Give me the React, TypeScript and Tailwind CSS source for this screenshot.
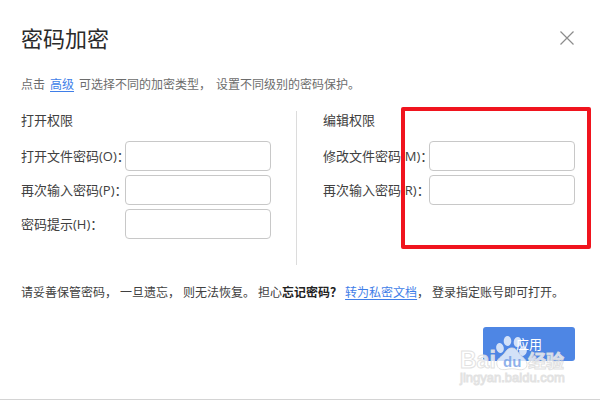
interface FieldProps {
  id: string;
  label: string;
}

function OpenField({ id, label }: FieldProps) {
  return (
    <div className="flex items-center">
      <label htmlFor={id} className="w-[104px] shrink-0 whitespace-nowrap">{label}</label>
      <input id={id} type="password" className="h-[30px] w-0 flex-1 rounded border border-[#c8c8c8] bg-white px-2 outline-none" />
    </div>
  );
}

function EditField({ id, label }: FieldProps) {
  return (
    <div className="flex items-center">
      <label htmlFor={id} className="w-[106px] shrink-0 whitespace-nowrap">{label}</label>
      <input id={id} type="password" className="h-[30px] w-0 flex-1 rounded border border-[#c8c8c8] bg-white px-2 outline-none" />
    </div>
  );
}

function Watermark() {
  return (
    <svg
      viewBox="0 0 112 52"
      className="pointer-events-none absolute right-[30px] bottom-[13px] h-[52px] w-[112px]"
      fill="#ffffff"
      fillOpacity="0.75"
      stroke="#dedede"
      strokeOpacity="0.9"
      strokeWidth="1"
    >
      <text x="2" y="34" fontSize="23" fontWeight="700" fontFamily="Liberation Sans, sans-serif">Bai</text>
      <g stroke="none">
        <ellipse cx="42" cy="14" rx="3.8" ry="5" transform="rotate(-12 42 14)" />
        <ellipse cx="49.5" cy="7" rx="3.8" ry="5" />
        <ellipse cx="59.5" cy="8" rx="3.8" ry="5" transform="rotate(8 59.5 8)" />
        <ellipse cx="65" cy="17" rx="3.8" ry="5" transform="rotate(14 65 17)" />
      </g>
      <path d="M54 14c-5 0-6 4-9 7-5 4-7 6-6 10 1 4 4 5 9 4.500 4-1 8-1 12 0 5 1 9-1 9-5 0-4-3-6-7-10-3-3-4-6.500-8-6.500z" />
      <text x="45" y="33" fontSize="15" fontWeight="700" fill="#6b97e3" stroke="none" fontFamily="Liberation Sans, sans-serif">du</text>
      <text x="70" y="34" fontSize="18" fontWeight="700" fontFamily="'Noto Sans CJK SC', sans-serif">经验</text>
      <text x="2" y="48" fontSize="13" fontFamily="Liberation Sans, sans-serif">jingyan.baidu.com</text>
    </svg>
  );
}

export default function App() {
  return (
    <div className="relative flex min-h-screen flex-col border-b border-[#d4d4d4] bg-white pr-[25px] pl-[21px] font-['Open_Sans','Noto_Sans_CJK_SC',sans-serif] text-[13px] leading-5 text-[#404040]">
      <header className="flex items-center justify-between pt-[23px]">
        <h1 className="text-[22px] leading-[30px] text-[#2a2a2a]">密码加密</h1>
        <button type="button" aria-label="关闭" className="p-px">
          <svg viewBox="0 0 14 14" className="size-[14px]" fill="none" stroke="#8c8c8c" strokeWidth="1.2">
            <path d="M0.5 0.5l13 13M13.5 0.5l-13 13" />
          </svg>
        </button>
      </header>

      <p className="mt-[22px] flex gap-[5px] text-xs leading-5 whitespace-nowrap text-[#6c6c6c]">
        <span>点击</span>
        <a href="#advanced" className="text-[#3f7ee8] underline underline-offset-2">高级</a>
        <span>可选择不同的加密类型，</span>
        <span>设置不同级别的密码保护。</span>
      </p>

      <form id="encrypt" className="mt-4 grid grid-cols-[275fr_279fr]">
        <section className="flex flex-col gap-1 pr-[25px]">
          <h2 className="mb-[7px] leading-[19px]">打开权限</h2>
          <OpenField id="open-password" label="打开文件密码(O)：" />
          <OpenField id="open-repeat" label="再次输入密码(P)：" />
          <OpenField id="open-hint" label="密码提示(H)：" />
        </section>
        <section className="relative flex flex-col gap-1 border-l border-[#dcdcdc] pb-[60px] pl-[26px]">
          <h2 className="mb-[7px] leading-[19px]">编辑权限</h2>
          <EditField id="edit-password" label="修改文件密码(M)：" />
          <EditField id="edit-repeat" label="再次输入密码(R)：" />
          <div className="pointer-events-none absolute -top-1 -right-4 h-[142px] w-[190px] rounded-xs border-4 border-[#f0141e]" />
        </section>
      </form>

      <p className="mt-[18px] flex gap-[3px] text-xs leading-5 whitespace-nowrap">
        <span>请妥善保管密码，</span>
        <span>一旦遗忘，</span>
        <span>则无法恢复。</span>
        <span>担心<b className="text-[#222222]">忘记密码？</b></span>
        <span>
          <a href="#private" className="text-[#3f7ee8] underline underline-offset-2">转为私密文档</a>，
        </span>
        <span>登录指定账号即可打开。</span>
      </p>

      <div className="mt-6 flex justify-end">
        <button type="submit" form="encrypt" className="h-[34px] w-[92px] rounded-[3px] bg-[#4e86e4] text-[#ffffff]">应用</button>
      </div>

      <Watermark />
    </div>
  );
}
